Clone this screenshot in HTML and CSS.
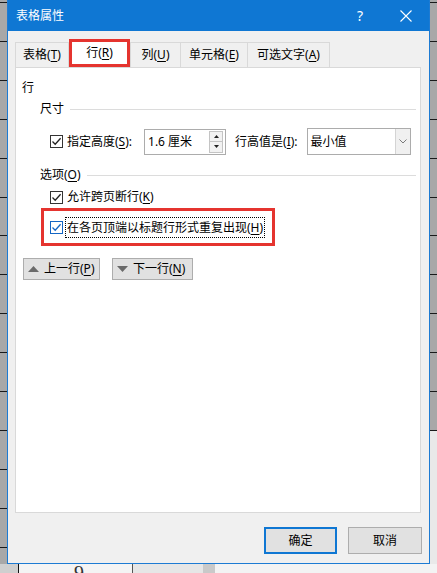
FILE: index.html
```html
<!DOCTYPE html>
<html lang="zh-CN">
<head>
<meta charset="utf-8">
<title>表格属性</title>
<link rel="stylesheet" href="styles.css">
</head>
<body>
<div class="desk">
  <div class="dialog">
    <div class="titlebar">
      <span class="title">表格属性</span>
      <span class="tb-btn help">?</span>
      <span class="tb-btn close">
        <svg width="12" height="12" viewBox="0 0 12 12"><path d="M0.5 0.5 L11.5 11.5 M11.5 0.5 L0.5 11.5" stroke="#fff" stroke-width="1.1" fill="none"/></svg>
      </span>
    </div>
    <div class="body">
      <div class="tabs">
        <div class="tab t1">表格(<u>T</u>)</div>
        <div class="tab t2 active">行(<u>R</u>)</div>
        <div class="tab t3">列(<u>U</u>)</div>
        <div class="tab t4">单元格(<u>E</u>)</div>
        <div class="tab t5">可选文字(<u>A</u>)</div>
      </div>
      <div class="panel">
        <div class="heading">行</div>
        <div class="group"><span>尺寸</span><i class="rule"></i></div>
        <div class="size-row">
          <span class="cb"><svg width="11" height="11" viewBox="0 0 11 11"><path d="M1.5 5.5 L4.2 8.2 L9.6 2.2" stroke="#222" stroke-width="1.3" fill="none"/></svg></span>
          <span class="lbl">指定高度(<u>S</u>):</span>
          <div class="spin">
            <span class="spin-val">1.6 厘米</span>
            <div class="spin-btns">
              <span class="sb"><svg width="5" height="3" viewBox="0 0 5 3"><path d="M0 3 L2.5 0 L5 3Z" fill="#222"/></svg></span>
              <span class="sb"><svg width="5" height="3" viewBox="0 0 5 3"><path d="M0 0 L2.5 3 L5 0Z" fill="#222"/></svg></span>
            </div>
          </div>
          <span class="lbl lbl2">行高值是(<u>I</u>):</span>
          <div class="select">
            <span class="sel-val">最小值</span>
            <span class="sel-arrow"><svg width="8" height="5" viewBox="0 0 8 5"><path d="M0.5 0.5 L4 4 L7.5 0.5" stroke="#7a7a7a" stroke-width="1" fill="none"/></svg></span>
          </div>
        </div>
        <div class="group group2"><span>选项(<u>O</u>)</span><i class="rule"></i></div>
        <div class="opt">
          <span class="cb"><svg width="11" height="11" viewBox="0 0 11 11"><path d="M1.5 5.5 L4.2 8.2 L9.6 2.2" stroke="#222" stroke-width="1.3" fill="none"/></svg></span>
          <span class="opt-text">允许跨页断行(<u>K</u>)</span>
        </div>
        <div class="opt mark">
          <span class="cb cb-focus"><svg width="11" height="11" viewBox="0 0 11 11"><path d="M1.5 5.5 L4.2 8.2 L9.6 2.2" stroke="#1466c4" stroke-width="1.3" fill="none"/></svg></span>
          <span class="opt-text focus">在各页顶端以标题行形式重复出现(<u>H</u>)</span>
        </div>
        <div class="navs">
          <button class="nav nav-up"><svg width="11" height="6" viewBox="0 0 11 6"><path d="M0 6 L5.5 0 L11 6Z" fill="#6a6a6a"/></svg><span class="nav-text">上一行(<u>P</u>)</span></button>
          <button class="nav nav-down"><svg width="11" height="6" viewBox="0 0 11 6"><path d="M0 0 L5.5 6 L11 0Z" fill="#6a6a6a"/></svg><span class="nav-text">下一行(<u>N</u>)</span></button>
        </div>
      </div>
      <div class="footer">
        <button class="btn ok">确定</button>
        <button class="btn">取消</button>
      </div>
    </div>
  </div>
  <div class="doc-row">
    <span class="doc-gap"></span>
    <span class="doc-cell"><span class="nine">9</span></span>
    <span class="doc-light"></span>
    <span class="doc-bar"></span>
    <span class="doc-white"></span>
  </div>
</div>
</body>
</html>
```
FILE: styles.css
```css
* { box-sizing: border-box; margin: 0; padding: 0; }
html, body { width: 437px; height: 573px; overflow: hidden; }
body {
  font-family: "Noto Sans", "Noto Sans CJK SC", sans-serif;
  font-size: 12px;
  line-height: 16px;
  color: #000;
  background: #a9a9a9;
}
u { text-decoration: underline; text-underline-offset: 2px; }

.desk {
  width: 437px;
  height: 573px;
  display: flex;
  flex-direction: column;
  background:
    linear-gradient(#e9e9e9, #e9e9e9) right 431px / 7px 140px no-repeat,
    repeating-linear-gradient(to bottom, transparent 0 2px, #1a1a1a 2px 3px, transparent 3px 38.9px),
    #a8a8a8;
}

/* dialog window */
.dialog {
  margin-left: 7px;
  width: 423px;
  height: 564px;
  flex: none;
  background: #f0f0f0;
  border: 1px solid #1d7bd3;
  border-top: 0;
  display: flex;
  flex-direction: column;
}
.titlebar {
  height: 31px;
  flex: none;
  background: #0f77d3;
  color: #fff;
  display: flex;
  align-items: center;
  padding-left: 8px;
}
.title { flex: 1; font-size: 12px; }
.tb-btn {
  width: 46px;
  height: 31px;
  display: flex;
  align-items: center;
  justify-content: center;
}
.help { font-size: 14px; font-family: "Noto Sans", sans-serif; }

.body {
  flex: 1;
  display: flex;
  flex-direction: column;
  padding: 11px 8px 0 7px;
}

/* tabs */
.tabs {
  display: flex;
  align-items: flex-end;
  height: 25px;
  flex: none;
}
.tab {
  height: 25px;
  border: 1px solid #d9d9d9;
  border-bottom: 0;
  background: #f0f0f0;
  display: flex;
  align-items: center;
  justify-content: center;
  margin-right: -1px;
  white-space: nowrap;
}
.t1 { width: 54px; }
.t2 { width: 61px; }
.t3 { width: 51px; }
.t4 { width: 68px; }
.t5 { width: 83px; }
.tab.active {
  height: 28px;
  background: #fff;
  border: 3px solid #e5342f;
  position: relative;
  z-index: 1;
  margin-left: 1px;
  margin-right: 0;
}

/* panel */
.panel {
  flex: 1;
  background: #fff;
  border: 1px solid #d9d9d9;
  padding-top: 12px;
}
.heading { margin-left: 6px; }
.group {
  display: flex;
  align-items: center;
  margin: 5px 4px 0 24px;
}
.group .rule {
  flex: 1;
  height: 1px;
  background: #dcdcdc;
  margin-left: 6px;
}
.group2 { margin-top: 12px; }

.cb {
  width: 13px;
  height: 13px;
  border: 1px solid #333;
  background: #fff;
  display: flex;
  align-items: center;
  justify-content: center;
  flex: none;
}
.cb-focus { border-color: #1466c4; }

.size-row {
  display: flex;
  align-items: center;
  height: 27px;
  margin: 11px 0 0 34px;
}
.lbl { margin-left: 4px; white-space: nowrap; }
.lbl2 { margin-left: 9px; }
.spin {
  margin-left: 12px;
  width: 82px;
  height: 26px;
  border: 1px solid #acacac;
  display: flex;
  align-items: center;
  padding: 0 2px 0 3px;
}
.spin-val { flex: 1; }
.spin-btns {
  display: flex;
  flex-direction: column;
  width: 14px;
  height: 22px;
}
.sb {
  flex: 1;
  border: 1px solid #c4c4c4;
  background: #f2f2f2;
  display: flex;
  align-items: center;
  justify-content: center;
}
.sb + .sb { border-top: 0; }

.select {
  margin-left: 9px;
  width: 104px;
  height: 27px;
  border: 1px solid #acacac;
  display: flex;
  align-items: stretch;
}
.sel-val {
  flex: 1;
  padding-left: 3px;
  display: flex;
  align-items: center;
}
.sel-arrow {
  width: 15px;
  border-left: 1px solid #d4d4d4;
  background: #f0f0f0;
  display: flex;
  align-items: center;
  justify-content: center;
}

.opt {
  display: flex;
  align-items: center;
  height: 16px;
  margin: 6px 0 0 34px;
}
.opt-text { margin-left: 4px; white-space: nowrap; }
.opt.mark {
  margin: 3px 0 0 25px;
  width: 234px;
  height: 38px;
  border: 3px solid #e5342f;
  padding-left: 6px;
}
.opt-text.focus {
  margin-left: 2px;
  border: 1px dotted #000;
  padding: 1px 1px;
  line-height: 17px;
}

.navs {
  display: flex;
  gap: 12px;
  margin: 12px 0 0 7px;
}
.nav {
  height: 22px;
  border: 1px solid #adadad;
  background: #e1e1e1;
  font: inherit;
  color: #000;
  display: flex;
  align-items: center;
  gap: 5px;
  padding-left: 4px;
}
.nav-text { white-space: nowrap; }
.nav-up { width: 77px; }
.nav-down { width: 81px; }

/* footer */
.footer {
  height: 50px;
  flex: none;
  display: flex;
  justify-content: flex-end;
  align-items: flex-start;
  gap: 11px;
  padding: 14px 0 0 0;
  margin-right: -1px;
}
.btn {
  width: 74px;
  height: 27px;
  border: 1px solid #adadad;
  background: #e1e1e1;
  font: inherit;
  color: #000;
}
.btn.ok { border: 2px solid #0f77d3; width: 73px; }

/* document strip under the dialog */
.doc-row {
  flex: 1;
  display: flex;
  overflow: hidden;
}
.doc-gap { width: 18px; background: #cfcfcf; }
.doc-cell {
  width: 115px;
  background: #f4f4f4;
  border-left: 1px solid #111;
  border-right: 1px solid #555;
}
.nine {
  display: block;
  margin: 1px 0 0 55px;
  font-family: "Liberation Serif", serif;
  font-size: 20px;
  line-height: 16px;
  color: #333;
}
.doc-light { width: 70px; background: #e6e6e6; }
.doc-bar { width: 12px; background: #c9c9c9; }
.doc-white { flex: 1; background: #f3f3f3; }
```
